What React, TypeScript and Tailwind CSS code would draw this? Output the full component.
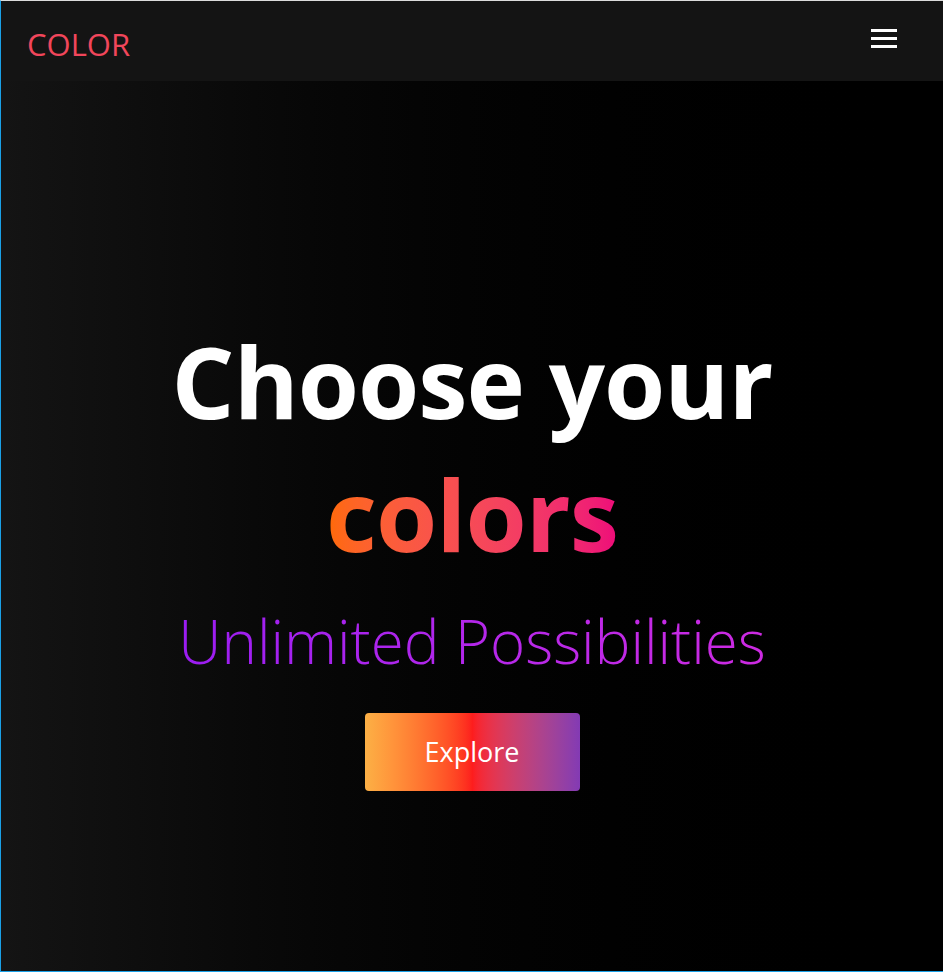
import React from "react";

const font = { fontFamily: "'Open Sans', 'Noto Sans', sans-serif" };

const Navbar = () => (
  <nav className="flex h-[80px] shrink-0 items-center justify-between bg-[#141414] pl-[26px] pr-[46px]">
    <a href="#" className="pt-[6px] text-[31px] font-normal leading-none text-[#f1465b]">
      COLOR
    </a>
    <button className="flex flex-col gap-[5px] pb-[6px]" aria-label="menu">
      <span className="block h-[3px] w-[26px] bg-white" />
      <span className="block h-[3px] w-[26px] bg-white" />
      <span className="block h-[3px] w-[26px] bg-white" />
    </button>
  </nav>
);

const Hero = () => (
  <section className="flex flex-1 flex-col items-center justify-center bg-gradient-to-r from-[#141414] to-[#000000] pt-[53px] text-center">
    <h1 className="text-[99px] font-bold leading-[133px] tracking-[-1px] text-white">
      Choose your
      <br />
      <span className="inline-block bg-gradient-to-r from-[#ff6a00] to-[#ee0979] bg-clip-text text-transparent">
        colors
      </span>
    </h1>
    <p className="mt-[16px] inline-block bg-gradient-to-r from-[#9b1cf2] to-[#cd2ae2] bg-clip-text text-[60px] font-light leading-[90px] text-transparent">
      Unlimited Possibilities
    </p>
    <button className="mt-[27px] flex h-[78px] w-[215px] items-center justify-center rounded-[4px] bg-gradient-to-r from-[#fcb045] via-[#fd1d1d] to-[#833ab4] text-[27px] text-white">
      Explore
    </button>
  </section>
);

export default function App() {
  return (
    <div
      className="flex h-screen flex-col overflow-hidden border-t border-l border-b border-t-[#dcdcdc] border-l-[#1aa0e6] border-b-[#1aa0e6] bg-black"
      style={font}
    >
      <Navbar />
      <Hero />
    </div>
  );
}
